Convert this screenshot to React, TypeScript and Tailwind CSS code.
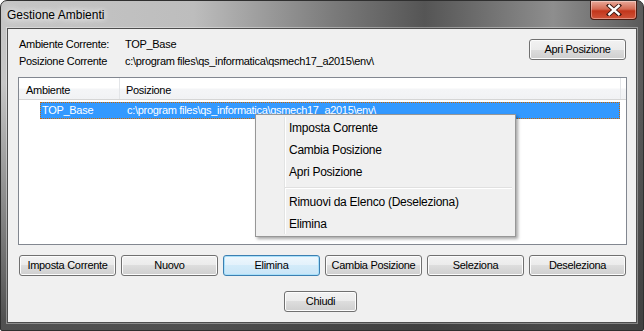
import React from 'react';

const FONT = "font-['Liberation_Sans',Arial,sans-serif]";

const BTN =
  'h-[21px] rounded-[3px] border border-[#707070] bg-[linear-gradient(#f2f2f2_0%,#ebebeb_50%,#dddddd_50%,#cfcfcf_100%)] shadow-[inset_0_0_0_1px_#fcfcfc] text-[11px] tracking-[-0.3px] text-black leading-none flex items-center justify-center';

const BTN_FOCUS =
  'h-[21px] rounded-[3px] border border-[#3c7fb1] bg-[linear-gradient(#eef7fd_0%,#e2f1fb_50%,#d3ebf9_50%,#c9e5f7_100%)] shadow-[inset_0_0_0_1px_#a9e0fa] text-[11px] tracking-[-0.3px] text-black leading-none flex items-center justify-center';

function Button({ label, w, focused }: { label: string; w: string; focused?: boolean }) {
  return <div className={`${focused ? BTN_FOCUS : BTN} ${w}`}>{label}</div>;
}

function CloseButton() {
  return (
    <div className="w-[47px] h-[19px] rounded-b-[4px] border border-t-0 border-[#4a1c12] bg-[linear-gradient(#e9a99a_0%,#d46a53_45%,#c2361b_55%,#d0543a_100%)] shadow-[inset_0_0_0_1px_rgba(255,255,255,0.35)] flex items-center justify-center">
      <svg width="16" height="12" viewBox="0 0 16 12">
        <path d="M3 1.5 L13 10.5 M13 1.5 L3 10.5" stroke="#3a1610" strokeWidth="4.2" strokeLinecap="square" />
        <path d="M3.3 1.8 L12.7 10.2 M12.7 1.8 L3.3 10.2" stroke="#ffffff" strokeWidth="2.4" strokeLinecap="square" />
      </svg>
    </div>
  );
}

const menuItems = ['Imposta Corrente', 'Cambia Posizione', 'Apri Posizione'];
const menuItems2 = ['Rimuovi da Elenco (Deseleziona)', 'Elimina'];

function ContextMenu() {
  return (
    <div className="absolute left-[254px] top-[113px] w-[261px] border border-[#979797] bg-[#f0f0f0] pt-[2px] pb-[1px] shadow-[2px_2px_3px_rgba(0,0,0,0.35)] text-[12px] tracking-[-0.25px] text-black">
      <div className="absolute left-[28px] top-[2px] bottom-[2px] w-[2px] border-l border-[#e2e3e3] bg-white" />
      {menuItems.map((m) => (
        <div key={m} className="h-[22px] leading-[22px] pl-[33px] relative">
          {m}
        </div>
      ))}
      <div className="h-[8px] pt-[4px] pl-[29px] pr-[3px] relative">
        <div className="h-[2px] border-t border-[#e0e0e0] bg-white" />
      </div>
      {menuItems2.map((m) => (
        <div key={m} className="h-[22px] leading-[22px] pl-[33px] relative">
          {m}
        </div>
      ))}
    </div>
  );
}

export default function App() {
  return (
    <div className={`${FONT} relative w-[644px] h-[331px] overflow-hidden rounded-t-[7px] rounded-b-[2px] border border-[#2f2f2f] bg-[linear-gradient(to_bottom,transparent_25%,rgba(60,60,60,0.85)_97%),linear-gradient(to_right,#c6c6c6_0%,#bdbdbd_30%,#7a7a7a_52%,#555555_66%,#8e8e8e_86%,#5a5a5a_100%)] flex flex-col`}>
      {/* title bar */}
      <div className="h-[27px] flex justify-between items-start pl-[6px] pr-[6px]">
        <span className="pt-[7px] text-[12px] leading-[14px] text-black [text-shadow:0_0_6px_#ffffff,0_0_10px_#ffffff]">
          Gestione Ambienti
        </span>
        <CloseButton />
      </div>

      {/* client area */}
      <div className="mx-[6px] h-[295px] border border-[#4d4d4d] bg-[#f0f0f0] shadow-[0_0_0_1px_rgba(255,255,255,0.35)] flex flex-col">
        <div className="h-[48px] pt-[7px] pl-[11px] pr-[10px] flex justify-between items-start">
          <div className="grid grid-cols-[106px_auto] text-[11px] leading-[17px] tracking-[-0.3px] text-black">
            <span>Ambiente Corrente:</span>
            <span>TOP_Base</span>
            <span>Posizione Corrente</span>
            <span>c:\program files\qs_informatica\qsmech17_a2015\env\</span>
          </div>
          <div className="mt-[3px]">
            <Button label="Apri Posizione" w="w-[97px]" />
          </div>
        </div>

        {/* list view */}
        <div className="ml-[10px] w-[609px] h-[168px] border border-[#828790] bg-white flex flex-col text-[11px] tracking-[-0.3px]">
          <div className="h-[22px] border-b border-[#d5d5d5] bg-[linear-gradient(#ffffff_0%,#ffffff_45%,#f4f5f7_55%,#f1f2f4_100%)] flex text-black">
            <div className="w-[101px] border-r border-[#e3e5e8] pl-[7px] pt-[6px] leading-[13px]">Ambiente</div>
            <div className="w-[501px] border-r border-[#e3e5e8] pl-[6px] pt-[6px] leading-[13px]">Posizione</div>
          </div>
          <div className="pt-[2px]">
            <div className="ml-[21px] w-[580px] h-[17px] bg-[#3399ff] border border-dotted border-[#cc6600] flex text-white leading-[15px]">
              <span className="w-[85px] pl-[1px]">TOP_Base</span>
              <span className="pl-[1px]">c:\program files\qs_informatica\qsmech17_a2015\env\</span>
            </div>
          </div>
        </div>

        {/* buttons */}
        <div className="mt-[10px] pl-[11px] flex gap-[5px]">
          <Button label="Imposta Corrente" w="w-[97px]" />
          <Button label="Nuovo" w="w-[97px]" />
          <Button label="Elimina" w="w-[97px]" focused />
          <Button label="Cambia Posizione" w="w-[97px]" />
          <Button label="Seleziona" w="w-[97px]" />
          <Button label="Deseleziona" w="w-[97px]" />
        </div>
        <div className="mt-[15px] ml-[276px]">
          <Button label="Chiudi" w="w-[73px]" />
        </div>
      </div>

      <ContextMenu />
    </div>
  );
}
